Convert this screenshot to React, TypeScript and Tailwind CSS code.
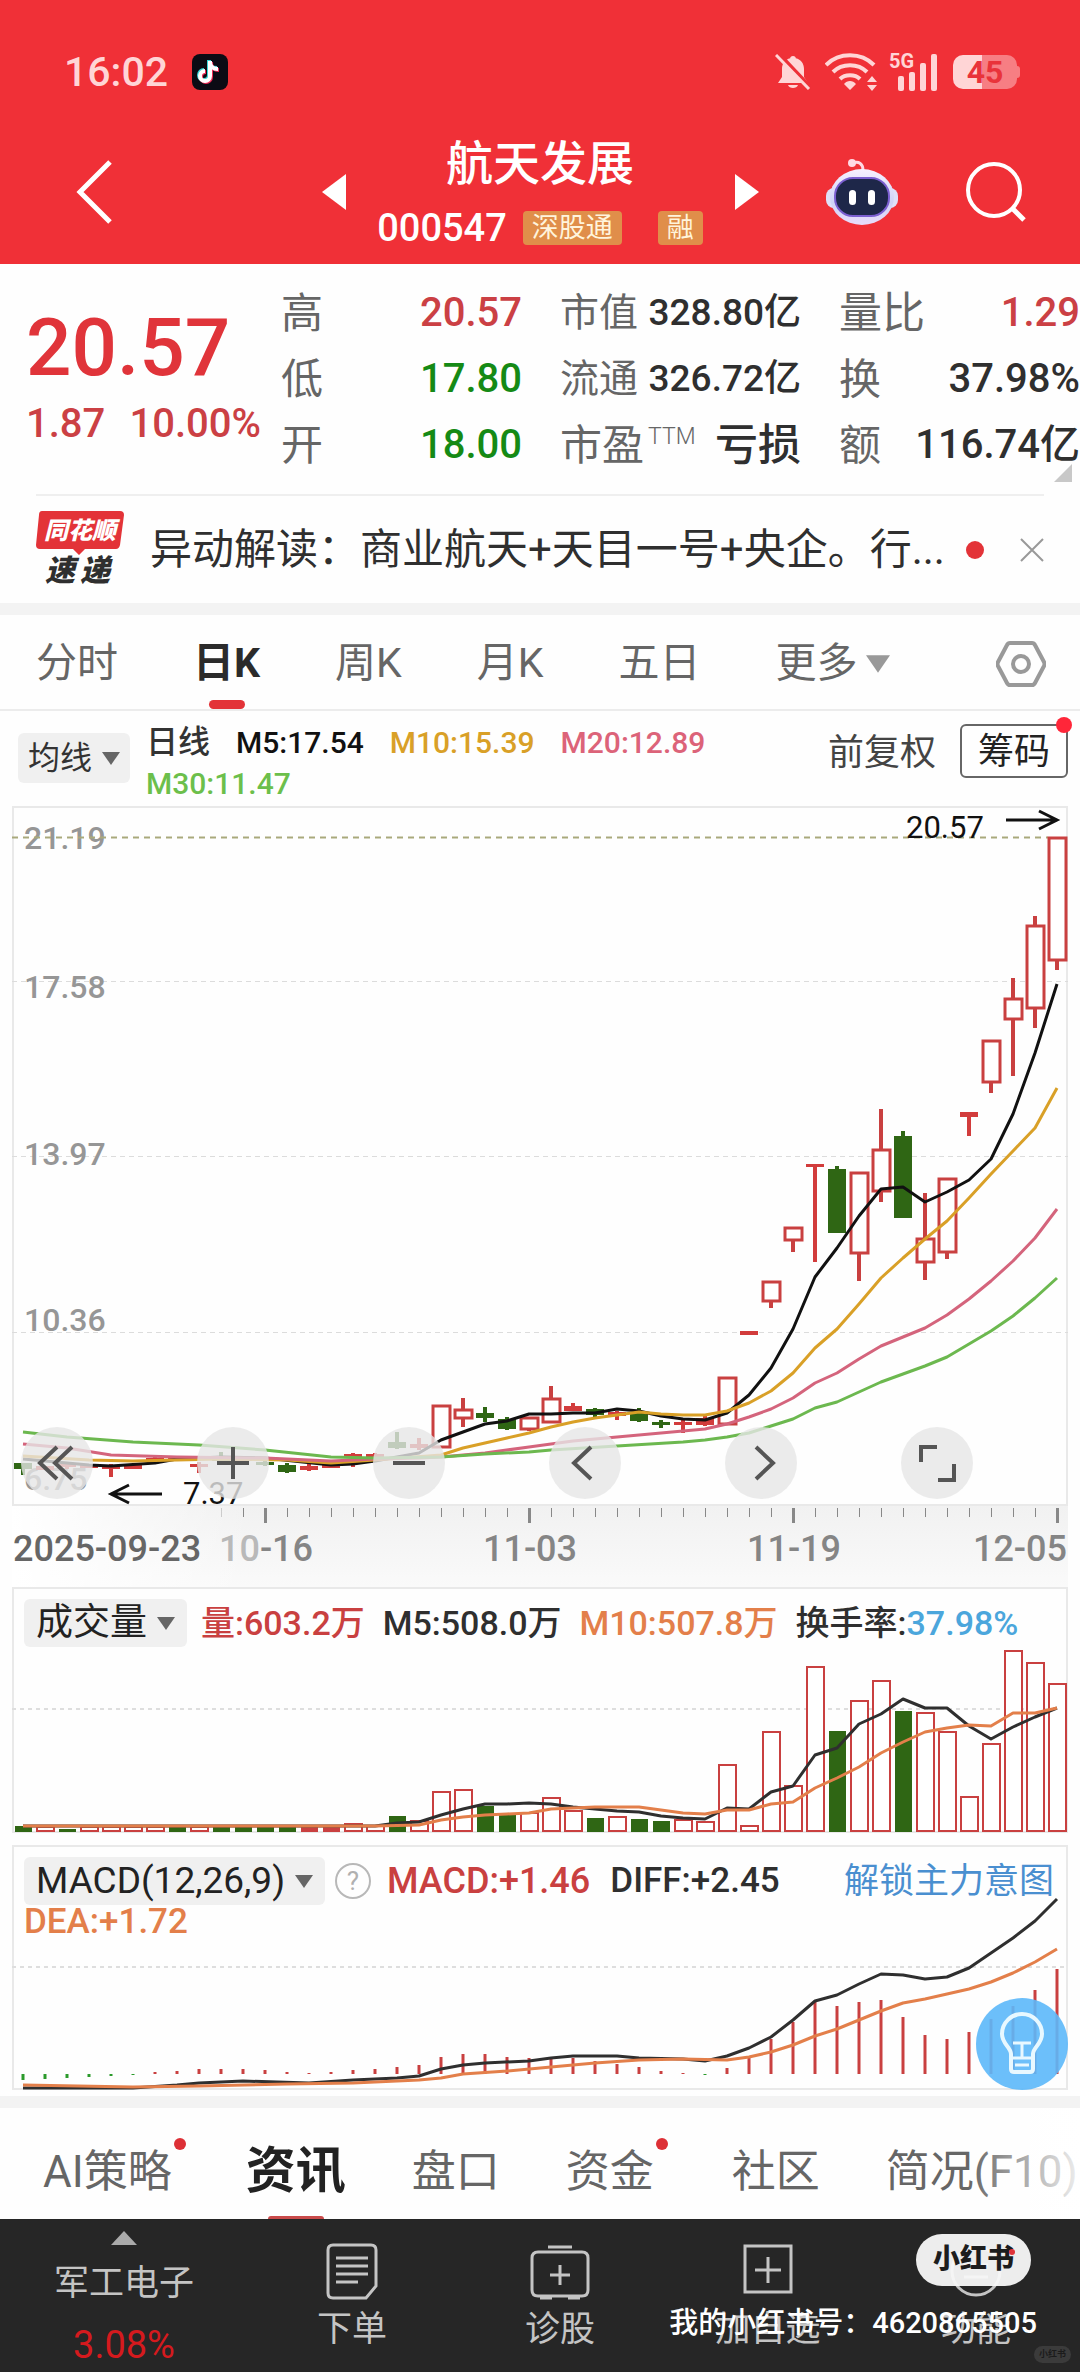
import type { ReactNode } from "react";

const RED = "#c94040";
const GREEN = "#2f6614";

/** Horizontal centre of the trading day with the given index. */
const cx = (i: number) => 23 + 22 * i;

type Kind = "up" | "down" | "solid";
// index, high, body top, body bottom, low, kind
type Candle = [number, number, number, number, number, Kind];

const CANDLES: Candle[] = [
  [0, 1463, 1463, 1469, 1475, "down"],
  [1, 1466, 1466, 1470, 1470, "solid"],
  [2, 1463, 1464, 1467, 1469, "solid"],
  [3, 1464, 1465, 1468, 1468, "solid"],
  [4, 1464, 1466, 1469, 1477, "solid"],
  [5, 1464, 1465, 1469, 1469, "solid"],
  [6, 1457, 1458, 1461, 1461, "solid"],
  [7, 1456, 1457, 1460, 1460, "solid"],
  [8, 1462, 1464, 1467, 1473, "solid"],
  [9, 1452, 1458, 1461, 1461, "down"],
  [10, 1457, 1458, 1461, 1461, "solid"],
  [11, 1457, 1462, 1465, 1466, "down"],
  [12, 1463, 1465, 1472, 1473, "down"],
  [13, 1464, 1466, 1470, 1471, "solid"],
  [14, 1463, 1464, 1468, 1468, "solid"],
  [15, 1453, 1454, 1457, 1467, "solid"],
  [16, 1453, 1454, 1457, 1457, "solid"],
  [17, 1432, 1442, 1448, 1449, "down"],
  [18, 1438, 1444, 1448, 1450, "solid"],
  [19, 1406, 1406, 1447, 1447, "up"],
  [20, 1398, 1410, 1418, 1427, "up"],
  [21, 1407, 1413, 1418, 1422, "down"],
  [22, 1417, 1419, 1429, 1430, "down"],
  [23, 1417, 1418, 1429, 1431, "up"],
  [24, 1386, 1399, 1422, 1422, "up"],
  [25, 1403, 1406, 1411, 1411, "solid"],
  [26, 1408, 1409, 1415, 1418, "down"],
  [27, 1411, 1412, 1416, 1420, "solid"],
  [28, 1408, 1413, 1421, 1422, "down"],
  [29, 1420, 1422, 1425, 1428, "down"],
  [30, 1418, 1422, 1425, 1433, "solid"],
  [31, 1416, 1418, 1425, 1426, "solid"],
  [32, 1378, 1378, 1424, 1424, "up"],
  [33, 1331, 1331, 1335, 1335, "solid"],
  [34, 1282, 1282, 1301, 1308, "up"],
  [35, 1228, 1228, 1240, 1252, "up"],
  [36, 1164, 1164, 1167, 1262, "solid"],
  [37, 1166, 1169, 1233, 1233, "down"],
  [38, 1173, 1173, 1253, 1281, "up"],
  [39, 1109, 1150, 1191, 1202, "up"],
  [40, 1131, 1136, 1218, 1218, "down"],
  [41, 1193, 1239, 1262, 1280, "up"],
  [42, 1179, 1179, 1252, 1259, "up"],
  [43, 1112, 1112, 1117, 1136, "solid"],
  [44, 1041, 1041, 1082, 1093, "up"],
  [45, 978, 999, 1019, 1076, "up"],
  [46, 916, 926, 1008, 1028, "up"],
  [47, 838, 838, 960, 970, "up"],
];

type Point = [number, number];

const MA5: Point[] = [
  [0, 1459], [3, 1465], [4, 1466], [6, 1463], [7, 1459], [9, 1457], [11, 1458], [14, 1465], [15, 1464],
  [16, 1461], [17, 1457], [18, 1453], [19, 1440], [20, 1432], [21, 1424], [22, 1421], [23, 1414],
  [24, 1414], [25, 1413], [26, 1413], [27, 1409], [28, 1411], [29, 1416], [30, 1419], [31, 1420],
  [32, 1413], [33, 1395], [34, 1368], [35, 1329], [36, 1277], [37, 1248], [38, 1216], [39, 1189],
  [40, 1187], [41, 1202], [42, 1192], [43, 1180], [44, 1159], [45, 1114], [46, 1053], [47, 984],
];
const MA10: Point[] = [
  [0, 1456], [3, 1460], [5, 1461], [9, 1459], [12, 1460], [14, 1463], [16, 1460], [19, 1455], [20, 1448],
  [21, 1443], [22, 1438], [23, 1433], [24, 1427], [25, 1422], [26, 1418], [27, 1415], [28, 1412],
  [29, 1414], [30, 1415], [31, 1415], [32, 1411], [33, 1403], [34, 1391], [35, 1373], [36, 1348],
  [37, 1329], [38, 1304], [39, 1278], [40, 1258], [41, 1239], [42, 1221], [43, 1198], [44, 1174],
  [45, 1151], [46, 1128], [47, 1088],
];
const MA20: Point[] = [
  [0, 1444], [2, 1448], [4, 1455], [7, 1457], [11, 1458], [14, 1461], [16, 1459], [18, 1458], [19, 1457],
  [21, 1453], [23, 1447], [25, 1441], [27, 1437], [29, 1433], [31, 1429], [32, 1424], [33, 1417],
  [34, 1409], [35, 1398], [36, 1383], [37, 1373], [38, 1359], [39, 1346], [40, 1337], [41, 1328],
  [42, 1315], [43, 1299], [44, 1281], [45, 1261], [46, 1238], [47, 1209],
];
const MA30: Point[] = [
  [0, 1432], [2, 1437], [5, 1442], [8, 1445], [11, 1450], [14, 1457], [16, 1458], [19, 1457], [21, 1454],
  [23, 1452], [24, 1450], [27, 1446], [30, 1442], [31, 1440], [32, 1437], [33, 1433], [34, 1426],
  [35, 1419], [36, 1408], [37, 1402], [38, 1392], [39, 1382], [40, 1374], [41, 1366], [42, 1357],
  [43, 1344], [44, 1331], [45, 1316], [46, 1298], [47, 1278],
];

const VOLUMES: [number, Kind][] = [
  [1826, "down"], [1827, "up"], [1829, "down"], [1827, "up"], [1827, "up"], [1827, "up"], [1827, "up"],
  [1826, "down"], [1827, "up"], [1826, "down"], [1827, "down"], [1827, "down"], [1826, "down"],
  [1826, "solid"], [1826, "solid"], [1824, "up"], [1826, "up"], [1816, "down"], [1821, "up"],
  [1792, "up"], [1790, "up"], [1806, "down"], [1815, "down"], [1813, "up"], [1798, "up"], [1811, "up"],
  [1818, "down"], [1817, "up"], [1819, "down"], [1821, "down"], [1820, "up"], [1822, "up"],
  [1765, "up"], [1826, "up"], [1732, "up"], [1786, "up"], [1667, "up"], [1731, "down"], [1701, "up"],
  [1681, "up"], [1711, "down"], [1713, "up"], [1732, "up"], [1797, "up"], [1744, "up"], [1651, "up"],
  [1663, "up"], [1684, "up"],
];
const VOL5: Point[] = [
  [0, 1826], [16, 1826], [17, 1823], [18, 1822], [19, 1815], [20, 1809], [21, 1804], [22, 1804],
  [23, 1803], [24, 1804], [25, 1807], [26, 1809], [27, 1811], [28, 1812], [29, 1816], [30, 1818],
  [31, 1819], [32, 1808], [33, 1809], [34, 1792], [35, 1786], [36, 1755], [37, 1748], [38, 1724],
  [39, 1714], [40, 1699], [41, 1708], [42, 1708], [43, 1726], [44, 1739], [45, 1727], [46, 1717], [47, 1708],
];
const VOL10: Point[] = [
  [0, 1826], [16, 1826], [18, 1825], [19, 1820], [20, 1817], [21, 1815], [22, 1814], [23, 1813],
  [24, 1809], [25, 1808], [26, 1807], [28, 1807], [29, 1810], [30, 1813], [31, 1814], [32, 1810],
  [33, 1810], [34, 1804], [35, 1802], [36, 1788], [37, 1778], [38, 1767], [39, 1753], [40, 1742],
  [41, 1732], [42, 1728], [43, 1725], [44, 1726], [45, 1713], [46, 1713], [47, 1708],
];

const MACD_BARS = [
  -6, -5, -4, -3, -2, -1, 2, 3, 5, 5, 5, 4, 2, 1, 2, 4, 5, 7, 9, 17, 20, 20, 17, 16, 17, 16, 13, 10, 7,
  3, 1, -1, 6, 16, 35, 52, 72, 68, 72, 74, 57, 39, 35, 42, 55, 68, 84, 105,
];
const DIFF: Point[] = [
  [0, 2088], [5, 2088], [7, 2085], [8, 2083], [10, 2081], [13, 2083], [15, 2080], [17, 2078], [18, 2076],
  [19, 2069], [20, 2065], [21, 2063], [23, 2061], [24, 2058], [25, 2056], [27, 2056], [28, 2058],
  [30, 2059], [31, 2061], [32, 2056], [33, 2048], [34, 2037], [35, 2020], [36, 2001], [37, 1995],
  [38, 1984], [39, 1974], [40, 1975], [41, 1979], [42, 1977], [43, 1968], [44, 1953], [45, 1938],
  [46, 1921], [47, 1899],
];
const DEA: Point[] = [
  [0, 2085], [5, 2087], [8, 2086], [12, 2084], [15, 2083], [17, 2081], [18, 2080], [19, 2078], [20, 2074],
  [22, 2071], [24, 2067], [26, 2063], [28, 2060], [30, 2059], [32, 2060], [33, 2057], [34, 2052],
  [35, 2045], [36, 2036], [37, 2029], [38, 2020], [39, 2011], [40, 2003], [41, 1999], [42, 1994],
  [43, 1989], [44, 1982], [45, 1973], [46, 1962], [47, 1949],
];

function Line({ points, color }: { points: Point[]; color: string }) {
  return (
    <polyline
      points={points.map(([i, y]) => `${cx(i)},${y}`).join(" ")}
      fill="none"
      stroke={color}
      strokeWidth="3"
      strokeLinejoin="round"
    />
  );
}

function Caret({ className }: { className: string }) {
  return (
    <svg viewBox="0 0 18 13" className={className} fill="currentColor" aria-hidden="true">
      <path d="M0 0h18L9 13z" />
    </svg>
  );
}

function StatusBar() {
  return (
    <div className="flex h-[120px] items-center pt-6 pr-[60px] pl-16 text-[#ffd5d6]">
      <span className="text-[41px] leading-[48px] font-medium">16:02</span>
      <svg viewBox="0 0 36 36" className="ml-6 size-9" aria-hidden="true">
        <rect width="36" height="36" rx="8" fill="#0b0b14" />
        <g fill="none" strokeWidth="4">
          <path d="M18 7v15a5 5 0 1 1-5-5M18 8c0 4 3 7 8 7" stroke="#39d5d8" transform="translate(-1 -1)" />
          <path d="M18 7v15a5 5 0 1 1-5-5M18 8c0 4 3 7 8 7" stroke="#ee2a55" transform="translate(1 1)" />
          <path d="M18 7v15a5 5 0 1 1-5-5M18 8c0 4 3 7 8 7" stroke="#fff" />
        </g>
      </svg>
      <div className="ml-auto flex items-center">
        <svg viewBox="0 0 36 36" className="size-9" aria-hidden="true">
          <path
            d="M18 2c2 0 2.600 1 2.800 2.200C26 5.500 29 9.500 29 15v8l4 6H3l4-6v-8C7 9.500 10 5.500 15.200 4.200 15.400 3 16 2 18 2zM13 31h10c-1 4-9 4-10 0z"
            fill="currentColor"
          />
          <path d="M4 0 37 35" stroke="#ee3038" strokeWidth="4" />
          <path d="M1 1 34 35" stroke="currentColor" strokeWidth="3" />
        </svg>
        <svg viewBox="0 0 52 38" className="ml-[14px] h-[38px] w-[52px]" fill="none" stroke="currentColor" strokeWidth="4" aria-hidden="true">
          <path d="M1 12c13-13 35-13 48 0M8 19c9-9 25-9 34 0M15 26c5-5 15-5 20 0" />
          <path d="m19 31c3-4 9-4 12 0l-6 6zM42 29l5-6 5 6zM42 32h10l-5 6z" fill="currentColor" stroke="none" />
        </svg>
        <svg viewBox="0 -8 50 46" className="mb-2 ml-3 h-[46px] w-[50px]" fill="currentColor" aria-label="5G">
          <text x="0" y="15" fontSize="20" fontWeight="700">5G</text>
          <rect x="9" y="23" width="6" height="15" rx="2" />
          <rect x="20" y="19" width="6" height="19" rx="2" />
          <rect x="31" y="10" width="6" height="28" rx="2" />
          <rect x="42" y="1" width="6" height="37" rx="2" />
        </svg>
        <div className="ml-[14px] flex items-center">
          <div className="h-[34px] w-16 rounded-[10px] bg-linear-to-r from-[#ffd5d6] from-45% to-[#f77e83] to-45% text-center text-[32px] leading-[34px] font-bold text-[#e9333a]">
            45
          </div>
          <span className="h-3 w-[3px] rounded-r bg-[#f77e83]" />
        </div>
      </div>
    </div>
  );
}

function Header() {
  return (
    <header className="bg-[#f03037] text-white">
      <StatusBar />
      <nav className="grid h-36 grid-cols-[1fr_auto_1fr] items-center">
        <button aria-label="返回" className="ml-[76px] w-9">
          <svg viewBox="0 0 36 64" className="h-16 w-9" fill="none" stroke="currentColor" strokeWidth="5">
            <path d="M34 2 4 32l30 30" />
          </svg>
        </button>
        <div className="flex w-[437px] items-center justify-between">
          <button aria-label="上一只">
            <svg viewBox="0 0 24 36" className="h-9 w-6" fill="currentColor"><path d="M24 0v36L0 18z" /></svg>
          </button>
          <div className="flex flex-col items-center">
            <h1 className="text-[47px] leading-[60px] font-medium">航天发展</h1>
            <div className="mt-3 flex h-11 items-center">
              <span className="text-[38px] leading-[44px] font-medium">000547</span>
              <span className="ml-4 rounded-sm bg-[#e08e4a] px-[9px] text-[27px] leading-[34px] text-[#fff4dc]">深股通</span>
              <span className="ml-9 rounded-sm bg-[#e08e4a] px-[9px] text-[27px] leading-[34px] text-[#fff4dc]">融</span>
            </div>
          </div>
          <button aria-label="下一只">
            <svg viewBox="0 0 24 36" className="h-9 w-6" fill="currentColor"><path d="M0 0v36l24-18z" /></svg>
          </button>
        </div>
        <div className="flex items-center justify-end gap-[68px] pr-[54px]">
          <button aria-label="智能助手">
            <svg viewBox="0 0 72 66" className="h-[66px] w-[72px]">
              <defs>
                <linearGradient id="shell" x1="0" y1="0" x2="0" y2="1">
                  <stop offset="0" stopColor="#f7f0ff" />
                  <stop offset="0.6" stopColor="#cfd3f6" />
                  <stop offset="1" stopColor="#e9dcfa" />
                </linearGradient>
              </defs>
              <circle cx="26" cy="4" r="4" fill="#ffd9e4" />
              <path d="M27 4c6-2 10 1 10 7" fill="none" stroke="#ffd9e4" strokeWidth="3" />
              <rect y="29" width="72" height="20" rx="8" fill="#dfe0f8" />
              <ellipse cx="36" cy="38" rx="32" ry="28" fill="url(#shell)" />
              <rect x="9" y="19" width="54" height="38" rx="18" fill="#1e2749" stroke="#7b5fd0" strokeWidth="2" />
              <rect x="23" y="31" width="7" height="15" rx="3.500" fill="#fff" />
              <rect x="42" y="31" width="7" height="15" rx="3.500" fill="#fff" />
            </svg>
          </button>
          <button aria-label="搜索">
            <svg viewBox="0 0 60 60" className="size-[60px]" fill="none" stroke="currentColor" strokeWidth="4">
              <circle cx="28" cy="28" r="26" />
              <path d="m47 47 11 11" strokeWidth="5" />
            </svg>
          </button>
        </div>
      </nav>
    </header>
  );
}

function Row({ label, value, tone = "text-[#2f2f2f]", size = "text-[40px]", labelSize = "text-[42px]" }: {
  label: ReactNode;
  value: string;
  tone?: string;
  size?: string;
  labelSize?: string;
}) {
  return (
    <div className="flex h-[66px] items-center justify-between whitespace-nowrap">
      <dt className={`text-[#666] ${labelSize}`}>{label}</dt>
      <dd className={`font-medium ${tone} ${size}`}>{value}</dd>
    </div>
  );
}

function Quote() {
  return (
    <section className="relative flex pt-4 pb-4">
      <div className="w-[281px] shrink-0 pt-5 pl-[26px] font-medium text-[#e0343a]">
        <p className="text-[80px] leading-[96px]">20.57</p>
        <p className="mt-1 flex justify-between pr-[20px] text-[40px] leading-[48px] text-[#cb4044]">
          <span>1.87</span>
          <span>10.00%</span>
        </p>
      </div>
      <div className="grid flex-1 grid-cols-3 gap-[38px]">
        <dl>
          <Row label="高" value="20.57" tone="text-[#cb4044]" />
          <Row label="低" value="17.80" tone="text-[#158a15]" />
          <Row label="开" value="18.00" tone="text-[#158a15]" />
        </dl>
        <dl>
          <Row label="市值" value="328.80亿" size="text-[37px]" labelSize="text-[39px]" />
          <Row label="流通" value="326.72亿" size="text-[37px]" labelSize="text-[39px]" />
          <Row
            label={<span className="flex">市盈<span className="ml-1 text-[23px] leading-[46px] font-light">TTM</span></span>}
            value="亏损"
            size="text-[43px]"
          />
        </dl>
        <dl>
          <Row label="量比" value="1.29" tone="text-[#cb4044]" labelSize="text-[43px]" />
          <Row label="换" value="37.98%" />
          <Row label="额" value="116.74亿" />
        </dl>
      </div>
      <svg viewBox="0 0 18 18" className="absolute right-2 bottom-3 size-[18px]" fill="#c8c8c8" aria-hidden="true">
        <path d="M18 0v18H0z" />
      </svg>
    </section>
  );
}

function News() {
  return (
    <section className="mx-9 flex h-[109px] items-center border-t-2 border-[#efefef]">
      <div className="w-[88px] shrink-0">
        <svg viewBox="0 0 88 78" className="h-[78px] w-[88px]" role="img" aria-label="同花顺速递">
          <path d="M6 0h78q4 0 4 4l-4 30q-1 4-4 4H49l-6 6-6-6H4q-4 0-4-4L3 4q0-4 3-4z" fill="#e33338" />
          <text x="44" y="28" textAnchor="middle" fontSize="24" fontWeight="900" fontStyle="italic" fill="#fff">同花顺</text>
          <text y="70" fontSize="30" fontWeight="900" fontStyle="italic" fill="#2f2f2f">
            <tspan x="9">速</tspan>
            <tspan x="44">递</tspan>
          </text>
        </svg>
      </div>
      <a href="#news" className="ml-[26px] truncate text-[42px] leading-[60px] text-[#2f2f2f]">
        异动解读：商业航天+天目一号+央企。行...
      </a>
      <span className="ml-auto size-[18px] shrink-0 rounded-full bg-[#e33338]" />
      <button aria-label="关闭" className="ml-9">
        <svg viewBox="0 0 24 24" className="size-6" stroke="#999" strokeWidth="2"><path d="m1 1 22 22M23 1 1 23" /></svg>
      </button>
    </section>
  );
}

function PeriodTabs() {
  return (
    <div className="flex h-24 items-stretch gap-[75px] border-b-2 border-[#ececec] pt-1 pr-[34px] pl-9 text-[41px] whitespace-nowrap text-[#666]">
      <button>分时</button>
      <button className="relative font-bold text-[#2b2b2b]">
        日K
        <span className="absolute bottom-0 left-1/2 h-[9px] w-9 -translate-x-1/2 rounded-full bg-[#e33338]" />
      </button>
      <button>周K</button>
      <button>月K</button>
      <button>五日</button>
      <button className="flex items-center gap-2">
        更多
        <Caret className="h-[18px] w-6 text-[#999]" />
      </button>
      <button aria-label="设置" className="ml-auto">
        <svg viewBox="0 0 50 46" className="h-[46px] w-[50px]" fill="none" stroke="#999" strokeWidth="4">
          <path d="M14 2h22q2 0 3 2l9 17q1 2 0 4l-9 17q-1 2-3 2H14q-2 0-3-2L2 25q-1-2 0-4l9-17q1-2 3-2z" />
          <circle cx="25" cy="23" r="8" />
        </svg>
      </button>
    </div>
  );
}

function AverageLegend() {
  return (
    <div className="flex h-[95px] items-start pt-1 pr-3 pl-[18px] whitespace-nowrap">
      <button className="mt-[18px] flex h-[50px] items-center gap-[10px] rounded-md bg-[#f0f0f0] px-[10px] text-[32px] text-[#333]">
        均线
        <Caret className="h-[13px] w-[18px] text-[#666]" />
      </button>
      <div className="ml-4 flex w-[600px] flex-wrap gap-x-[26px] pt-[7px] text-[30px] leading-[41px] font-medium">
        <span className="text-[32px] text-[#333]">日线</span>
        <span className="text-[#111]">M5:17.54</span>
        <span className="text-[#d9a027]">M10:15.39</span>
        <span className="text-[#dc6379]">M20:12.89</span>
        <span className="text-[#6cbf4b]">M30:11.47</span>
      </div>
      <button className="mt-[11px] ml-auto text-[36px] leading-[54px] text-[#444]">前复权</button>
      <button className="relative mt-[9px] ml-[24px] h-[54px] rounded-md border-2 border-[#666] px-4 text-[36px] leading-[52px] text-[#222]">
        筹码
        <span className="absolute -top-[9px] -right-[6px] size-4 rounded-full bg-[#ff2639]" />
      </button>
    </div>
  );
}

function CandleShape({ candle }: { candle: Candle }) {
  const [i, high, top, bottom, low, kind] = candle;
  const x = cx(i);
  const color = kind === "down" ? GREEN : kind === "solid" ? "#d23c3c" : RED;
  return (
    <g stroke={color} strokeWidth="4" fill={color}>
      {high < top && <path d={`M${x} ${high}V${top}`} />}
      {low > bottom && <path d={`M${x} ${bottom}V${low}`} />}
      {kind === "up" ? (
        <rect x={x - 8} y={top} width="17" height={bottom - top} fill="#fff" strokeWidth="3" />
      ) : (
        <rect x={x - 9} y={top} width="18" height={bottom - top} stroke="none" />
      )}
    </g>
  );
}

function ChartButton({ label, path }: { label: string; path: string }) {
  return (
    <button aria-label={label} className="size-[72px] rounded-full bg-[#e6e6e6]/80">
      <svg viewBox="0 0 72 72" className="size-full" fill="none" stroke="#555" strokeWidth="4">
        <path d={path} />
      </svg>
    </button>
  );
}

function PriceChart() {
  return (
    <div className="relative mx-3">
      <svg viewBox="12 806 1056 700" className="block w-full overflow-visible" role="img" aria-label="日K线图">
        <rect x="13" y="807" width="1054" height="698" fill="none" stroke="#e9e9e9" strokeWidth="2" />
        <g stroke="#dcdcdc" strokeWidth="1" strokeDasharray="5 4">
          <path d="M12 981.500H1068M12 1156.500H1068M12 1332.500H1068" />
        </g>
        <g fontSize="32" fill="#969696" fontWeight="500">
          <text x="24" y="849">21.19</text>
          <text x="24" y="998">17.58</text>
          <text x="24" y="1165">13.97</text>
          <text x="24" y="1331">10.36</text>
          <text x="24" y="1490">6.75</text>
        </g>
        <path d="M12 837.500H1048" stroke="#a9a97c" strokeWidth="2" strokeDasharray="6 5" />
        {CANDLES.map((c) => <CandleShape key={c[0]} candle={c} />)}
        <Line points={MA5} color="#111" />
        <Line points={MA10} color="#d9a027" />
        <Line points={MA20} color="#d4647c" />
        <Line points={MA30} color="#6cb84f" />
        <g fontSize="31" fill="#111">
          <text x="906" y="838">20.57</text>
          <text x="183" y="1504">7.37</text>
        </g>
        <g fill="none" stroke="#111" strokeWidth="3">
          <path d="M1006 820h50M1039 811l18 9-18 9" />
          <path d="M162 1494h-50M129 1485l-18 9 18 9" />
        </g>
      </svg>
      <div className="absolute inset-x-0 bottom-[7px] flex justify-between pr-[95px] pl-[9px]">
        <ChartButton label="最左" path="M36 20 19 36l17 16M51 20 34 36l17 16" />
        <ChartButton label="放大" path="M36 20v32M20 36h32" />
        <ChartButton label="缩小" path="M20 36h32" />
        <ChartButton label="左移" path="M42 20 25 36l17 16" />
        <ChartButton label="右移" path="M31 20 48 36 31 52" />
        <ChartButton label="全屏" path="M20 35V20h16M53 37v16H37" />
      </div>
    </div>
  );
}

function DateAxis() {
  return (
    <div className="mx-3 bg-linear-to-b from-[#f1f1f1] to-[#fafafa]">
      <svg viewBox="12 1506 1056 81" className="block w-full" role="img" aria-label="日期轴">
        <defs>
          <linearGradient id="fade" x1="0" x2="1">
            <stop offset="0" stopColor="#fff" />
            <stop offset="1" stopColor="#fff" stopOpacity="0" />
          </linearGradient>
        </defs>
        <rect x="12" y="1506" width="240" height="81" fill="url(#fade)" />
        {Array.from({ length: 39 }, (_, n) => n + 9).map((i) => {
          const major = i % 12 === 11;
          return (
            <rect
              key={i}
              x={major ? cx(i) - 1 : cx(i)}
              y="1508"
              width={major ? 3 : 1}
              height={major ? 15 : 9}
              fill={i === 9 ? "#ccc" : "#888"}
            />
          );
        })}
        <g fontSize="36" fontWeight="500" fill="#858585">
          <text x="13" y="1561" fill="#666">2025-09-23</text>
          <text x="266" y="1561" textAnchor="middle">
            <tspan fill="#b9b9b9">10</tspan>-16
          </text>
          <text x="530" y="1561" textAnchor="middle">11-03</text>
          <text x="794" y="1561" textAnchor="middle">11-19</text>
          <text x="1067" y="1561" textAnchor="end">12-05</text>
        </g>
      </svg>
    </div>
  );
}

function VolumePanel() {
  return (
    <div className="mx-3 grid">
      <svg viewBox="12 1587 1056 246" className="col-start-1 row-start-1 block w-full" role="img" aria-label="成交量图">
        <rect x="13" y="1588" width="1054" height="244" fill="none" stroke="#e9e9e9" strokeWidth="2" />
        <path d="M12 1709H1068" stroke="#dedede" strokeWidth="2" strokeDasharray="4 4" />
        {VOLUMES.map(([top, kind], i) =>
          kind === "up" ? (
            <rect key={i} x={cx(i) - 8} y={top} width="17" height={1831 - top} fill="#fff" stroke={RED} strokeWidth="2" />
          ) : (
            <rect key={i} x={cx(i) - 8} y={top} width="17" height={1832 - top} fill={kind === "down" ? GREEN : RED} />
          ),
        )}
        <Line points={VOL5} color="#2f2f2f" />
        <Line points={VOL10} color="#e37f4a" />
      </svg>
      <div className="col-start-1 row-start-1 flex items-center self-start pt-3 pl-3 text-[34px] leading-[48px] font-medium whitespace-nowrap">
        <button className="mr-[14px] flex h-12 items-center gap-[10px] rounded-md bg-[#f0f0f0] px-3 font-normal text-[#222]">
          <span className="text-[37px]">成交量</span>
          <Caret className="h-[13px] w-[18px] text-[#666]" />
        </button>
        <span className="flex gap-[18px]">
          <span className="text-[#c94040]">量:603.2万</span>
          <span className="text-[#2f2f2f]">M5:508.0万</span>
          <span className="text-[#e37f4a]">M10:507.8万</span>
          <span className="text-[#2f2f2f]">换手率:<span className="text-[#4ba6dc]">37.98%</span></span>
        </span>
      </div>
    </div>
  );
}

function MacdPanel() {
  return (
    <div className="relative mx-3 mt-3 grid">
      <svg viewBox="12 1845 1056 245" className="col-start-1 row-start-1 block w-full" role="img" aria-label="MACD图">
        <rect x="13" y="1846" width="1054" height="243" fill="none" stroke="#e9e9e9" strokeWidth="2" />
        <path d="M12 1967H1068" stroke="#dedede" strokeWidth="2" strokeDasharray="4 4" />
        {MACD_BARS.map((h, i) => (
          <path key={i} d={`M${cx(i)} 2074v${-h}`} stroke={h > 0 ? "#c94040" : "#2b9a2b"} strokeWidth="3" />
        ))}
        <Line points={DIFF} color="#2f2f2f" />
        <Line points={DEA} color="#e37f4a" />
      </svg>
      <div className="col-start-1 row-start-1 flex items-start justify-between self-start pt-3 pr-[14px] pl-3 text-[35px] whitespace-nowrap">
        <div className="flex w-[770px] flex-wrap items-center font-medium">
          <button className="flex h-12 items-center gap-[10px] rounded-md bg-[#f0f0f0] px-3 text-[37px] font-normal text-[#222]">
            MACD(12,26,9)
            <Caret className="h-[13px] w-[18px] text-[#666]" />
          </button>
          <button aria-label="指标说明" className="ml-[10px] size-9 rounded-full border-2 border-[#b8b8b8] text-[26px] leading-8 font-normal text-[#b0b0b0]">
            ?
          </button>
          <span className="ml-4 text-[36px] leading-[48px] text-[#c94040]">MACD:+1.46</span>
          <span className="ml-5 leading-[48px] text-[#2f2f2f]">DIFF:+2.45</span>
          <span className="w-full leading-[34px] text-[#e37f4a]">DEA:+1.72</span>
        </div>
        <a href="#unlock" className="leading-[50px] text-[#4a8fd0]">解锁主力意图</a>
      </div>
      <button aria-label="提示" className="absolute right-0 bottom-0 size-[92px] rounded-full bg-[#5cb8fa]/90">
        <svg viewBox="0 0 92 92" className="size-full" fill="none" stroke="#e8f8ff" strokeWidth="4">
          <path d="M35 56c0-7-9-10-9-20a20 20 0 0 1 40 0c0 10-9 13-9 20v15q0 3-3 3H38q-3 0-3-3z" />
          <path d="M35 60h22M37 45h18M46 45v15M39 67h14" strokeWidth="3" />
        </svg>
      </button>
    </div>
  );
}

function InfoTabs() {
  return (
    <div className="relative flex h-[111px] items-stretch gap-[66px] overflow-hidden pt-4 pl-[43px] text-[44px] whitespace-nowrap text-[#666]">
      <button className="relative">
        AI策略
        <span className="absolute top-[14px] -right-[14px] size-3 rounded-full bg-[#dd3036]" />
      </button>
      <button className="relative ml-2 text-[50px] font-bold text-[#222]">
        资讯
        <span className="absolute bottom-0 left-1/2 h-[3px] w-14 -translate-x-1/2 rounded-t bg-[#c94a4a]" />
      </button>
      <button>盘口</button>
      <button className="relative">
        资金
        <span className="absolute top-[14px] -right-[14px] size-3 rounded-full bg-[#dd3036]" />
      </button>
      <button className="ml-3">社区</button>
      <button>简况(F10)</button>
      <span className="pointer-events-none absolute inset-y-0 right-0 w-28 bg-linear-to-r from-white/0 to-white/90" />
    </div>
  );
}

function NavItem({ label, children }: { label: string; children: ReactNode }) {
  return (
    <button className="flex h-full flex-1 flex-col items-center pt-[23px]">
      <svg viewBox="0 0 60 60" className="size-[60px]" fill="none" stroke="currentColor" strokeWidth="3" aria-hidden="true">
        {children}
      </svg>
      <span className="mt-[2px] text-[35px] leading-[52px]">{label}</span>
    </button>
  );
}

function BottomBar() {
  return (
    <footer className="relative flex h-[153px] bg-[#262626] text-[#c4c4c4]">
      <button className="flex w-[248px] shrink-0 flex-col items-center pt-3 leading-[52px]">
        <svg viewBox="0 0 26 14" className="h-[14px] w-[26px]" fill="#aaa" aria-hidden="true"><path d="M13 0 26 14H0z" /></svg>
        <span className="mt-[13px] text-[35px] leading-[52px]">军工电子</span>
        <span className="mt-[10px] text-[38px] leading-[50px] text-[#d51a1e]">3.08%</span>
      </button>
      <NavItem label="下单">
        <path d="M11 3h38q5 0 5 5v36L44 56H11q-5 0-5-5V8q0-5 5-5zM14 16h32M14 24h32M14 32h32M14 40h22" />
      </NavItem>
      <NavItem label="诊股">
        <path d="M8 10h44q6 0 6 6v32q0 6-6 6H8q-6 0-6-6V16q0-6 6-6zM18 5h24M30 23v20M20 33h20M10 56h12M38 56h12" />
      </NavItem>
      <NavItem label="加自选">
        <path d="M7 4h46v46H7zM30 15v26M17 28h26" />
      </NavItem>
      <NavItem label="功能">
        <circle cx="30" cy="29" r="24" />
        <path d="M18 23h24M18 35h24" />
      </NavItem>
      <div className="pointer-events-none absolute top-[15px] right-[43px] flex flex-col items-end text-white">
        <span className="relative mr-[6px] h-[52px] w-[115px] rounded-full bg-[#f8f8f8]/95 text-center text-[27px] leading-[51px] font-black text-[#1d1d1d]">
          小红书
          <span className="absolute top-[15px] right-[16px] size-[6px] rounded-full bg-[#e0343a]" />
        </span>
        <span className="mt-4 text-[29px] leading-[42px] font-medium whitespace-nowrap">我的小红书号：4620865505</span>
      </div>
      <span className="absolute right-[9px] bottom-[9px] rounded-full bg-[#3b3b3b] px-[5px] text-[9px] leading-[17px] font-bold text-[#1b1b1b]">小红书</span>
    </footer>
  );
}

export default function App() {
  return (
    <main className="w-full overflow-hidden bg-[#fefefe] font-[Roboto,'Noto_Sans_CJK_SC',sans-serif]" lang="zh-CN">
      <Header />
      <Quote />
      <News />
      <div className="h-3 bg-[#f3f3f3]" />
      <PeriodTabs />
      <AverageLegend />
      <PriceChart />
      <DateAxis />
      <VolumePanel />
      <MacdPanel />
      <div className="mt-[6px] h-3 bg-[#f3f3f3]" />
      <InfoTabs />
      <BottomBar />
    </main>
  );
}
